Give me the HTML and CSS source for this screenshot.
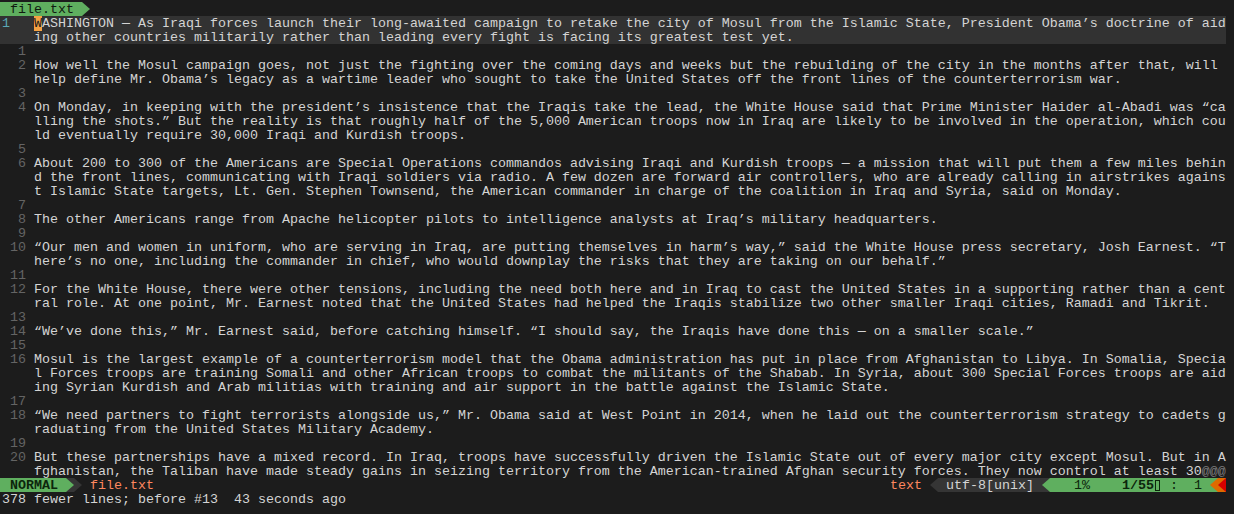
FILE: index.html
```html
<!DOCTYPE html>
<html>
<head>
<meta charset="utf-8">
<title>file.txt - VIM</title>
<link rel="stylesheet" href="styles.css">
</head>
<body>
<div class="vim">
  <div class="tabline">
    <span class="tab"> file.txt </span><span class="sep"><i class="r green"></i></span>
  </div>
  <div class="buf">
    <div class="line cur"><span class="nr">1</span><span class="txt"><span class="cursor">W</span>ASHINGTON — As Iraqi forces launch their long-awaited campaign to retake the city of Mosul from the Islamic State, President Obama’s doctrine of aiding other countries militarily rather than leading every fight is facing its greatest test yet.</span></div>
    <div class="line"><span class="nr">1</span><span class="txt"></span></div>
    <div class="line"><span class="nr">2</span><span class="txt">How well the Mosul campaign goes, not just the fighting over the coming days and weeks but the rebuilding of the city in the months after that, will help define Mr. Obama’s legacy as a wartime leader who sought to take the United States off the front lines of the counterterrorism war.</span></div>
    <div class="line"><span class="nr">3</span><span class="txt"></span></div>
    <div class="line"><span class="nr">4</span><span class="txt">On Monday, in keeping with the president’s insistence that the Iraqis take the lead, the White House said that Prime Minister Haider al-Abadi was “calling the shots.” But the reality is that roughly half of the 5,000 American troops now in Iraq are likely to be involved in the operation, which could eventually require 30,000 Iraqi and Kurdish troops.</span></div>
    <div class="line"><span class="nr">5</span><span class="txt"></span></div>
    <div class="line"><span class="nr">6</span><span class="txt">About 200 to 300 of the Americans are Special Operations commandos advising Iraqi and Kurdish troops — a mission that will put them a few miles behind the front lines, communicating with Iraqi soldiers via radio. A few dozen are forward air controllers, who are already calling in airstrikes against Islamic State targets, Lt. Gen. Stephen Townsend, the American commander in charge of the coalition in Iraq and Syria, said on Monday.</span></div>
    <div class="line"><span class="nr">7</span><span class="txt"></span></div>
    <div class="line"><span class="nr">8</span><span class="txt">The other Americans range from Apache helicopter pilots to intelligence analysts at Iraq’s military headquarters.</span></div>
    <div class="line"><span class="nr">9</span><span class="txt"></span></div>
    <div class="line"><span class="nr">10</span><span class="txt">“Our men and women in uniform, who are serving in Iraq, are putting themselves in harm’s way,” said the White House press secretary, Josh Earnest. “There’s no one, including the commander in chief, who would downplay the risks that they are taking on our behalf.”</span></div>
    <div class="line"><span class="nr">11</span><span class="txt"></span></div>
    <div class="line"><span class="nr">12</span><span class="txt">For the White House, there were other tensions, including the need both here and in Iraq to cast the United States in a supporting rather than a central role. At one point, Mr. Earnest noted that the United States had helped the Iraqis stabilize two other smaller Iraqi cities, Ramadi and Tikrit.</span></div>
    <div class="line"><span class="nr">13</span><span class="txt"></span></div>
    <div class="line"><span class="nr">14</span><span class="txt">“We’ve done this,” Mr. Earnest said, before catching himself. “I should say, the Iraqis have done this — on a smaller scale.”</span></div>
    <div class="line"><span class="nr">15</span><span class="txt"></span></div>
    <div class="line"><span class="nr">16</span><span class="txt">Mosul is the largest example of a counterterrorism model that the Obama administration has put in place from Afghanistan to Libya. In Somalia, Special Forces troops are training Somali and other African troops to combat the militants of the Shabab. In Syria, about 300 Special Forces troops are aiding Syrian Kurdish and Arab militias with training and air support in the battle against the Islamic State.</span></div>
    <div class="line"><span class="nr">17</span><span class="txt"></span></div>
    <div class="line"><span class="nr">18</span><span class="txt">“We need partners to fight terrorists alongside us,” Mr. Obama said at West Point in 2014, when he laid out the counterterrorism strategy to cadets graduating from the United States Military Academy.</span></div>
    <div class="line"><span class="nr">19</span><span class="txt"></span></div>
    <div class="line"><span class="nr">20</span><span class="txt">But these partnerships have a mixed record. In Iraq, troops have successfully driven the Islamic State out of every major city except Mosul. But in Afghanistan, the Taliban have made steady gains in seizing territory from the American-trained Afghan security forces. They now control at least 30<span class="nontext">@@@</span></span></div>
  </div>
  <div class="status">
    <span class="seg mode"> NORMAL </span><span class="sep gray-bg"><i class="r green"></i></span><span class="sep"><i class="r gray"></i></span><span class="seg fname"> file.txt</span>
    <span class="fill"></span>
    <span class="seg ftype">text </span><span class="sep"><i class="l gray"></i></span><span class="seg enc"> utf-8[unix] </span><span class="sep gray-bg"><i class="l green"></i></span><span class="seg pos">   1%    <b>1/55<span class="tofu"></span></b> :  1 </span><span class="sep green-bg"><i class="l orange"></i></span><span class="sep orange-bg"><i class="l red"></i></span>
  </div>
  <div class="cmdline">378 fewer lines; before #13  43 seconds ago</div>
</div>
</body>
</html>
```

FILE: styles.css
```css
html, body {
  margin: 0;
  padding: 0;
  background: #1c1c1c;
}

body {
  width: 1234px;
  height: 514px;
  overflow: hidden;
  font-family: "Liberation Mono", "DejaVu Sans Mono", monospace;
  font-size: 13.33px;
  line-height: 14px;
  color: #d4d4d4;
}

.vim {
  padding-top: 2px;
  display: flex;
  flex-direction: column;
}

/* tabline */
.tabline {
  display: flex;
  height: 14px;
}

.tab {
  background: #5faf5f;
  color: #101a10;
  padding: 1px 0 0 2px;
  height: 14px;
  box-sizing: border-box;
  white-space: pre;
}

.sep {
  display: block;
  flex: none;
  width: 8px;
  height: 14px;
}

.sep i {
  display: block;
  width: 100%;
  height: 100%;
}

.sep i.r { clip-path: polygon(0 0, 100% 50%, 0 100%); }
.sep i.l { clip-path: polygon(100% 0, 0 50%, 100% 100%); }

.green { background: #5faf5f; }
.gray { background: #353535; }
.orange { background: #df6a00; }
.red { background: #d70000; }

.gray-bg { background: #353535; }
.green-bg { background: #5faf5f; }
.orange-bg { background: #df6a00; }

/* buffer */
.buf {
  height: 462px;
  overflow: hidden;
}

.line {
  display: flex;
  width: 1226px;
  padding-left: 2px;
  box-sizing: border-box;
}

.line.cur {
  background: #323232;
}

.nr, .txt {
  padding-top: 1px;
  margin-bottom: -1px;
}

.nr {
  flex: none;
  width: 32px;
  padding-right: 8px;
  box-sizing: border-box;
  text-align: right;
  color: #646464;
}

.cur .nr {
  text-align: left;
  color: #5aa9b5;
}

.txt {
  flex: none;
  width: 1195px;
  min-height: 14px;
  white-space: break-spaces;
  word-break: break-all;
  line-break: anywhere;
}

.cursor {
  background: #f5a243;
  color: #1c1c1c;
}

.nontext {
  color: #7c7c7c;
}

/* status line */
.status {
  display: flex;
  width: 1226px;
  height: 14px;
  white-space: pre;
}

.seg {
  height: 14px;
  padding-top: 1px;
  box-sizing: border-box;
}

.mode {
  background: #5faf5f;
  color: #0c260c;
  font-weight: bold;
  padding-left: 2px;
}

.fname, .ftype {
  color: #ff875f;
}

.fill {
  flex: 1;
}

.enc {
  background: #353535;
  color: #d4d4d4;
}

.pos {
  background: #5faf5f;
  color: #0c260c;
}

.tofu {
  display: inline-block;
  width: 5px;
  height: 11px;
  margin: 0 2px 0 1px;
  border: 1px solid #0c260c;
  box-sizing: border-box;
  vertical-align: -2px;
}

.cmdline {
  height: 14px;
  padding: 1px 0 0 2px;
  box-sizing: border-box;
  white-space: pre;
}
```
